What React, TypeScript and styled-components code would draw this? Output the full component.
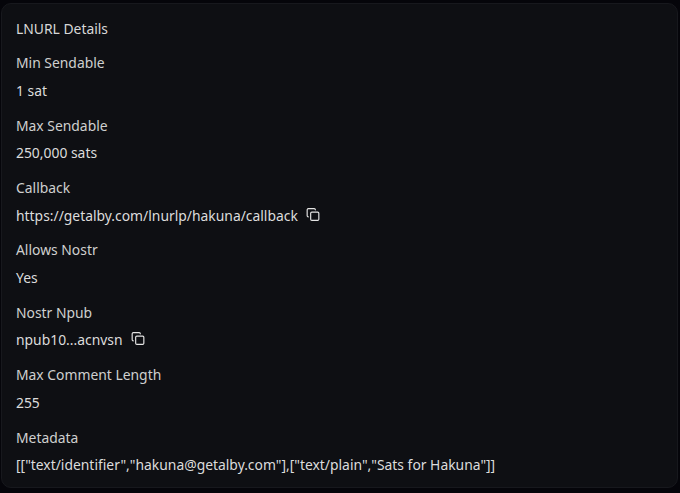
import styled, { createGlobalStyle } from "styled-components";
import { Copy } from "lucide-react";

const GlobalStyle = createGlobalStyle`
  html, body {
    margin: 0;
    padding: 0;
    background: #05050a;
  }
`;

const Page = styled.div`
  width: 680px;
  height: 493px;
  padding: 3px 2px 5px 1px;
  box-sizing: border-box;
  overflow: hidden;
`;

const Card = styled.section`
  height: 100%;
  box-sizing: border-box;
  padding: 15px 14px 0;
  background: #0e0f13;
  border: 1px solid #17181d;
  border-radius: 10px;
  font-family: "Noto Sans", sans-serif;
  font-size: 13.88px;
  line-height: 20px;
  color: #d8d8d8;
`;

const Title = styled.h2`
  margin: 0 0 14.2px;
  font-size: inherit;
  font-weight: 400;
  line-height: 20px;
`;

const List = styled.dl`
  margin: 0;
  display: flex;
  flex-direction: column;
  gap: 14.8px;
`;

const Item = styled.div`
  display: flex;
  flex-direction: column;
  gap: 7.6px;
`;

const Label = styled.dt`
  margin: 0;
  color: #cfcfcf;
`;

const Value = styled.dd`
  margin: 0;
  display: flex;
  align-items: center;
  gap: 8.5px;
  color: #dcdcdc;
  white-space: nowrap;
`;

const CopyButton = styled.button`
  display: flex;
  padding: 0;
  border: 0;
  background: none;
  color: #e4e4e4;
  transform: translateY(-1.5px);
`;

const details = [
  { label: "Min Sendable", value: "1 sat" },
  { label: "Max Sendable", value: "250,000 sats" },
  { label: "Callback", value: "https://getalby.com/lnurlp/hakuna/callback", copy: true },
  { label: "Allows Nostr", value: "Yes" },
  { label: "Nostr Npub", value: "npub10...acnvsn", copy: true },
  { label: "Max Comment Length", value: "255" },
  { label: "Metadata", value: '[["text/identifier","hakuna@getalby.com"],["text/plain","Sats for Hakuna"]]' },
];

export default function App() {
  return (
    <Page>
      <GlobalStyle />
      <Card>
        <Title>LNURL Details</Title>
        <List>
          {details.map((item) => (
            <Item key={item.label}>
              <Label>{item.label}</Label>
              <Value>
                {item.value}
                {item.copy && (
                  <CopyButton type="button" aria-label={`Copy ${item.label}`}>
                    <Copy size={14} strokeWidth={2} />
                  </CopyButton>
                )}
              </Value>
            </Item>
          ))}
        </List>
      </Card>
    </Page>
  );
}
